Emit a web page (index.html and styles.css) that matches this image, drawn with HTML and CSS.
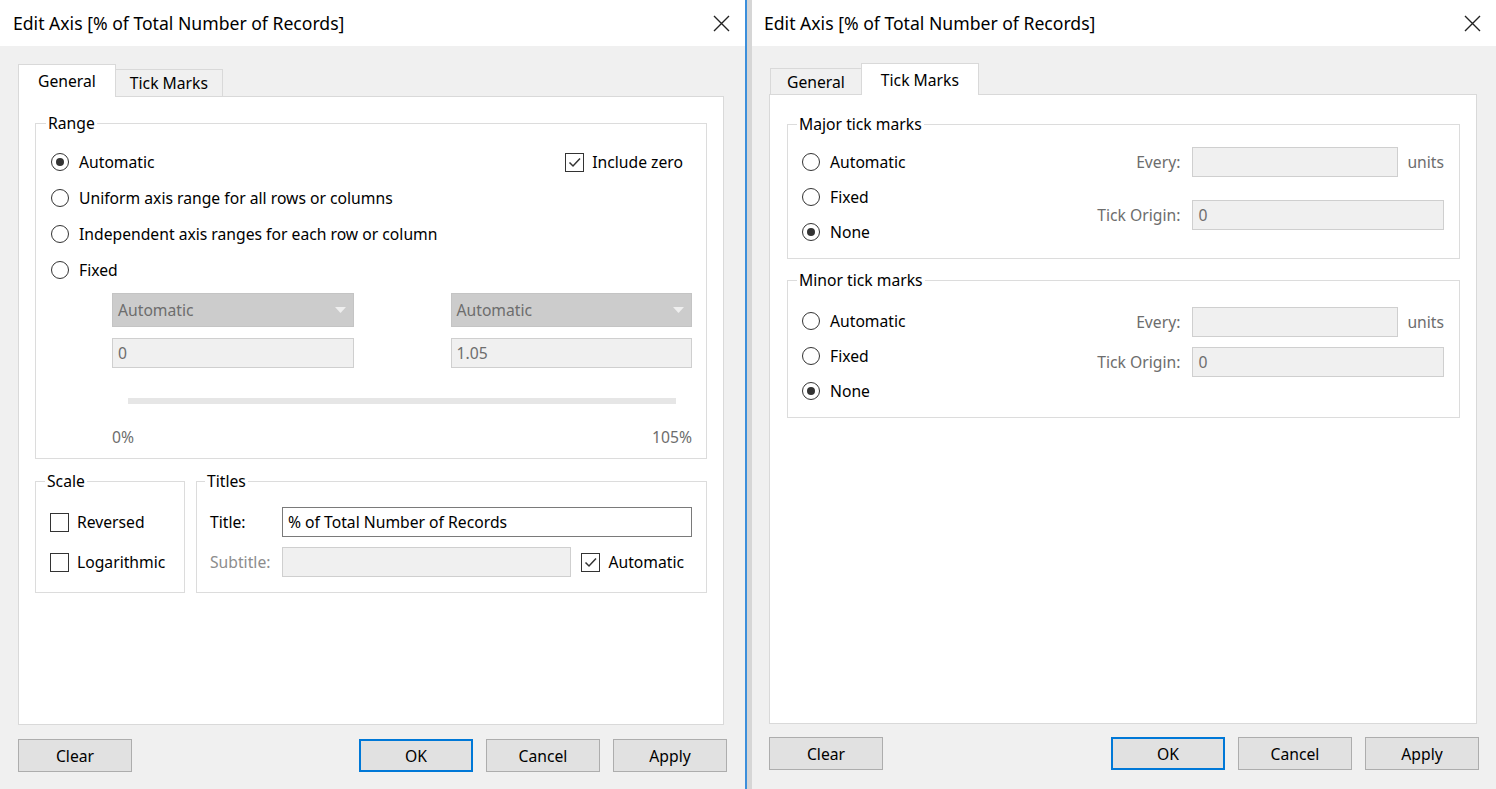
FILE: index.html
```html
<!DOCTYPE html>
<html lang="en">
<head>
<meta charset="utf-8">
<title>Edit Axis</title>
<link rel="stylesheet" href="styles.css">
</head>
<body>
<div class="screen">
  <section class="dialog dialog-left">
    <header class="titlebar">
      <span class="title">Edit Axis [% of Total Number of Records]</span>
      <svg class="close" viewBox="0 0 17 17"><path d="M1 1L16 16M16 1L1 16" stroke="#222" stroke-width="1.4" fill="none"/></svg>
    </header>
    <div class="dialog-body">
      <div class="tabs">
        <div class="tab active">General</div>
        <div class="tab">Tick Marks</div>
      </div>
      <div class="panel">
        <fieldset class="group group-range">
          <legend>Range</legend>
          <div class="option-row">
            <div class="option"><span class="radio on"></span><span>Automatic</span></div>
            <div class="check-option include-zero"><span class="check"><svg viewBox="0 0 15 15"><path d="M2.5 7.5L6 11L13 3.5" stroke="#333" stroke-width="1.5" fill="none"/></svg></span><span>Include zero</span></div>
          </div>
          <div class="option"><span class="radio"></span><span>Uniform axis range for all rows or columns</span></div>
          <div class="option"><span class="radio"></span><span>Independent axis ranges for each row or column</span></div>
          <div class="option"><span class="radio"></span><span>Fixed</span></div>
          <div class="fixed-block">
            <div class="fixed-fields">
              <div class="select"><span>Automatic</span><svg class="arrow" viewBox="0 0 11 7"><path d="M0 0H11L5.5 6Z" fill="#efefef"/></svg></div>
              <div class="select"><span>Automatic</span><svg class="arrow" viewBox="0 0 11 7"><path d="M0 0H11L5.5 6Z" fill="#efefef"/></svg></div>
              <div class="field">0</div>
              <div class="field">1.05</div>
            </div>
            <div class="slider"></div>
            <div class="scale-labels"><span>0%</span><span>105%</span></div>
          </div>
        </fieldset>
        <div class="bottom-groups">
          <fieldset class="group group-scale">
            <legend>Scale</legend>
            <div class="stack">
              <div class="check-option"><span class="check"></span><span>Reversed</span></div>
              <div class="check-option"><span class="check"></span><span>Logarithmic</span></div>
            </div>
          </fieldset>
          <fieldset class="group group-titles">
            <legend>Titles</legend>
            <div class="titles-grid">
              <span>Title:</span>
              <div class="input-text wide">% of Total Number of Records</div>
              <span class="muted-light">Subtitle:</span>
              <div class="field"></div>
              <div class="check-option auto-check"><span class="check"><svg viewBox="0 0 15 15"><path d="M2.5 7.5L6 11L13 3.5" stroke="#333" stroke-width="1.5" fill="none"/></svg></span><span>Automatic</span></div>
            </div>
          </fieldset>
        </div>
      </div>
      <div class="buttons">
        <div class="btn btn-clear">Clear</div>
        <div class="btn btn-ok">OK</div>
        <div class="btn">Cancel</div>
        <div class="btn">Apply</div>
      </div>
    </div>
  </section>
  <div class="divider"></div>
  <section class="dialog dialog-right">
    <header class="titlebar">
      <span class="title">Edit Axis [% of Total Number of Records]</span>
      <svg class="close" viewBox="0 0 17 17"><path d="M1 1L16 16M16 1L1 16" stroke="#222" stroke-width="1.4" fill="none"/></svg>
    </header>
    <div class="dialog-body">
      <div class="tabs">
        <div class="tab">General</div>
        <div class="tab active">Tick Marks</div>
      </div>
      <div class="panel">
        <fieldset class="group group-tick">
          <legend>Major tick marks</legend>
          <div class="tick-body">
            <div class="radio-list">
              <div class="option"><span class="radio"></span><span>Automatic</span></div>
              <div class="option"><span class="radio"></span><span>Fixed</span></div>
              <div class="option"><span class="radio on"></span><span>None</span></div>
            </div>
            <div class="tick-fields">
              <span class="muted label">Every:</span>
              <div class="field"></div>
              <span class="muted">units</span>
              <span class="muted label">Tick Origin:</span>
              <div class="field span2">0</div>
            </div>
          </div>
        </fieldset>
        <fieldset class="group group-tick group-minor">
          <legend>Minor tick marks</legend>
          <div class="tick-body">
            <div class="radio-list">
              <div class="option"><span class="radio"></span><span>Automatic</span></div>
              <div class="option"><span class="radio"></span><span>Fixed</span></div>
              <div class="option"><span class="radio on"></span><span>None</span></div>
            </div>
            <div class="tick-fields">
              <span class="muted label">Every:</span>
              <div class="field"></div>
              <span class="muted">units</span>
              <span class="muted label">Tick Origin:</span>
              <div class="field span2">0</div>
            </div>
          </div>
        </fieldset>
      </div>
      <div class="buttons">
        <div class="btn btn-clear">Clear</div>
        <div class="btn btn-ok">OK</div>
        <div class="btn">Cancel</div>
        <div class="btn">Apply</div>
      </div>
    </div>
  </section>
</div>
</body>
</html>
```

FILE: styles.css
```css
* { box-sizing: border-box; }
html, body { margin: 0; padding: 0; }
body {
  width: 1496px;
  height: 789px;
  overflow: hidden;
  font-family: "Noto Sans", "Open Sans", sans-serif;
  font-size: 15.7px;
  line-height: 24px;
  color: #000;
  background: #f0f0f0;
}
.screen { display: flex; height: 789px; }
.dialog { display: flex; flex-direction: column; }
.dialog-left { width: 745px; }
.divider { width: 7px; border-left: 2px solid #3c8fdb; background: #d6d6d6; }
.dialog-right { flex: 1; }

.titlebar {
  height: 46px;
  flex: none;
  background: #fff;
  display: flex;
  align-items: center;
  justify-content: space-between;
  padding: 0 15px 0 13px;
  font-size: 17.6px;
}
.dialog-right .titlebar { padding-left: 12px; }
.close { width: 17px; height: 17px; }

.dialog-body {
  flex: 1;
  display: flex;
  flex-direction: column;
  background: #f0f0f0;
  padding: 18px 21px 17px 18px;
}
.dialog-right .dialog-body { padding: 17px 19px 19px 17px; }

.tabs { display: flex; align-items: flex-end; height: 32px; flex: none; }
.dialog-right .tabs { height: 31px; }
.tab {
  height: 27px;
  padding: 0 14px;
  border: 1px solid #d9d9d9;
  border-bottom: none;
  background: #f0f0f0;
  display: flex;
  align-items: center;
}
.tab + .tab { margin-left: -1px; }
.tab.active {
  height: 33px;
  padding: 0 19px;
  background: #fff;
  margin-bottom: -1px;
  position: relative;
  z-index: 1;
}
.dialog-right .tab { height: 26px; margin-left: 1px; padding: 0 16px; }
.dialog-right .tab.active { height: 32px; margin-left: -1px; padding: 0 19px; }

.panel {
  flex: 1;
  background: #fff;
  border: 1px solid #d9d9d9;
  padding: 14px 16px 0 16px;
}
.dialog-right .panel { padding: 17px 16px 0 17px; }

.group { border: 1px solid #dcdcdc; margin: 0; min-width: 0; }
.group legend { padding: 0 2px; margin-left: -5px; line-height: 24px; }

.group-range { padding: 9px 14px 9px 15px; }
.option-row { display: flex; justify-content: space-between; align-items: center; }
.option { display: flex; align-items: center; gap: 10px; height: 36px; }
.radio {
  width: 18px; height: 18px;
  border: 1.5px solid #333;
  border-radius: 50%;
  background: #fff;
  flex: none;
  display: flex; align-items: center; justify-content: center;
}
.radio.on::after { content: ""; width: 8px; height: 8px; border-radius: 50%; background: #333; }
.check {
  width: 19px; height: 19px;
  border: 1.5px solid #333;
  background: #fff;
  flex: none;
  display: flex; align-items: center; justify-content: center;
}
.check svg { width: 15px; height: 15px; }
.check-option { display: flex; align-items: center; gap: 8px; height: 30px; }
.include-zero { margin-right: 9px; }

.fixed-block { margin: 5px 0 0 61px; }
.fixed-fields { display: grid; grid-template-columns: 1fr 1fr; column-gap: 97px; row-gap: 11px; }
.select {
  height: 34px;
  background: #cccccc;
  border: 1px solid #c4c4c4;
  color: #6d6d6d;
  display: flex; align-items: center; justify-content: space-between;
  padding: 0 7px 0 5px;
}
.arrow { width: 11px; height: 7px; }
.field {
  height: 30px;
  background: #f0f0f0;
  border: 1px solid #cfcfcf;
  color: #6d6d6d;
  padding: 0 5px;
  display: flex; align-items: center;
}
.slider { height: 6px; background: #e6e6e6; margin: 30px 16px 0; }
.scale-labels { display: flex; justify-content: space-between; color: #6d6d6d; margin-top: 21px; }

.bottom-groups { display: flex; gap: 11px; margin-top: 10px; }
.group-scale { flex: 0 0 150px; padding: 14px 10px 15px 14px; }
.stack { display: flex; flex-direction: column; gap: 10px; }
.group-titles { flex: 1; padding: 14px 14px 15px 13px; }
.titles-grid {
  display: grid;
  grid-template-columns: 62px 1fr auto;
  column-gap: 10px;
  row-gap: 10px;
  align-items: center;
}
.input-text {
  height: 30px;
  border: 1px solid #7a7a7a;
  background: #fff;
  padding: 0 5px;
  display: flex; align-items: center;
}
.wide { grid-column: 2 / 4; }
.muted { color: #6d6d6d; }
.muted-light { color: #8d8d8d; }
.auto-check { margin-right: 8px; }

.group-tick { padding: 8px 15px 9px 14px; }
.group-minor { margin-top: 9px; padding-top: 11px; padding-bottom: 9px; }
.tick-body { display: flex; justify-content: space-between; align-items: flex-start; }
.radio-list .option { height: 35px; }
.tick-fields {
  display: grid;
  grid-template-columns: auto 206px auto;
  column-gap: 9px;
  row-gap: 23px;
  margin-top: 3px;
  align-items: center;
}
.group-minor .tick-fields { row-gap: 10px; margin-top: 4px; }
.tick-fields .label { justify-self: end; margin-right: 3px; }
.span2 { grid-column: 2 / 4; }

.buttons { display: flex; gap: 13px; margin-top: 14px; margin-right: -3px; flex: none; }
.dialog-right .buttons { margin-top: 13px; margin-right: -2px; }
.btn {
  width: 114px; height: 33px;
  background: #e1e1e1;
  border: 1px solid #adadad;
  display: flex; align-items: center; justify-content: center;
}
.btn-clear { margin-right: auto; }
.btn-ok { border: 2px solid #0078d7; }
```
